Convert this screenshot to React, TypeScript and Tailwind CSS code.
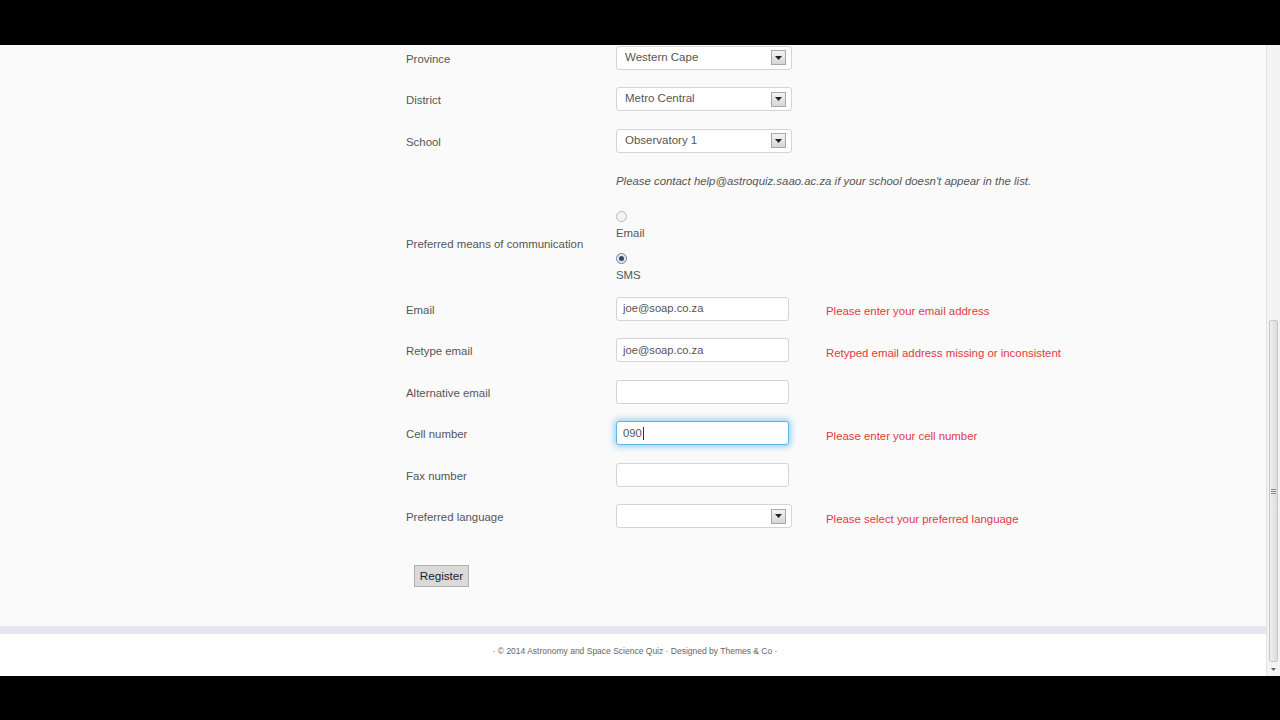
import React from 'react';

const FONT = { fontFamily: '"Liberation Sans", Arial, sans-serif' };

const SelectArrow = () => (
  <span className="flex h-[15px] w-[15px] items-center justify-center border border-[#a8a8a8] bg-gradient-to-b from-[#f4f4f4] to-[#d6d6d6]">
    <svg width="7" height="4" viewBox="0 0 7 4">
      <path d="M0 0 H7 L3.5 4 Z" fill="#222" />
    </svg>
  </span>
);

const FakeSelect: React.FC<{ value?: string }> = ({ value }) => (
  <div className="flex h-[24px] w-[176px] items-center justify-between rounded-[3px] border border-[#d4d4d4] bg-white pl-[8px] pr-[5px] text-[11.5px] text-[#555]">
    <span>{value ?? ''}</span>
    <SelectArrow />
  </div>
);

const FakeInput: React.FC<{ value?: string; focused?: boolean }> = ({ value, focused }) => (
  <div
    className={`flex h-[24px] w-[173px] items-center rounded-[3px] bg-white px-[6px] text-[11.2px] text-[#555] ${
      focused
        ? 'border border-[#5fb4e6] shadow-[0_0_6px_2px_rgba(82,168,236,0.55)]'
        : 'border border-[#d4d4d4]'
    }`}
  >
    <span>{value ?? ''}</span>
    {focused && <span className="ml-[1px] h-[13px] w-px bg-[#333]" />}
  </div>
);

type Row = { label: string; control: React.ReactNode; error?: string };

const FormRow: React.FC<Row> = ({ label, control, error }) => (
  <div className="flex h-[41.5px] items-center">
    <div className="w-[210px] pt-[4px] text-[11.4px] text-[#555]">{label}</div>
    <div className="w-[210px]">{control}</div>
    {error && <div className="pt-[7px] text-[11.4px] text-[#e0393e]">{error}</div>}
  </div>
);

const Radio: React.FC<{ checked?: boolean }> = ({ checked }) => (
  <span
    className={`flex h-[11px] w-[11px] items-center justify-center rounded-full border ${
      checked ? 'border-[#6d8aa5] bg-[#dfe8f0]' : 'border-[#b8b8b8] bg-[#f3f3f3]'
    }`}
  >
    {checked && <span className="h-[5px] w-[5px] rounded-full bg-[#2f4c68]" />}
  </span>
);

export default function App() {
  return (
    <div className="flex h-[720px] w-[1280px] flex-col overflow-hidden bg-black" style={FONT}>
      <div className="h-[45px] shrink-0 bg-black" />
      <div className="flex h-[631px] shrink-0">
        <div className="flex flex-1 flex-col overflow-hidden bg-[#fafafa]">
          <div className="-mt-[8.25px] pl-[406px]">
            <FormRow label="Province" control={<FakeSelect value="Western Cape" />} />
            <FormRow label="District" control={<FakeSelect value="Metro Central" />} />
            <FormRow label="School" control={<FakeSelect value="Observatory 1" />} />
            <div className="flex h-[40px] items-center">
              <div className="w-[210px]" />
              <div className="text-[11.4px] italic text-[#555]">
                Please contact help@astroquiz.saao.ac.za if your school doesn't appear in the list.
              </div>
            </div>
            <div className="flex h-[86.5px] items-center">
              <div className="w-[210px] text-[11.4px] text-[#555]">Preferred means of communication</div>
              <div className="flex h-full flex-col pt-[9.5px] text-[11.4px] text-[#555]">
                <div className="flex flex-col">
                  <Radio />
                  <span className="mt-[3px] leading-[16px]">Email</span>
                </div>
                <div className="mt-[12px] flex flex-col">
                  <Radio checked />
                  <span className="mt-[3px] leading-[16px]">SMS</span>
                </div>
              </div>
            </div>
            <FormRow
              label="Email"
              control={<FakeInput value="joe@soap.co.za" />}
              error="Please enter your email address"
            />
            <FormRow
              label="Retype email"
              control={<FakeInput value="joe@soap.co.za" />}
              error="Retyped email address missing or inconsistent"
            />
            <FormRow label="Alternative email" control={<FakeInput />} />
            <FormRow label="Cell number" control={<FakeInput value="090" focused />} error="Please enter your cell number" />
            <FormRow label="Fax number" control={<FakeInput />} />
            <FormRow
              label="Preferred language"
              control={<FakeSelect />}
              error="Please select your preferred language"
            />
            <div className="mt-[26px] pl-[8px]">
              <button className="h-[22px] w-[55px] border border-[#b0b0b0] bg-[#dadada] text-[11.7px] text-[#222]">
                Register
              </button>
            </div>
          </div>
          <div className="flex-1" />
          <div className="h-[8px] bg-[#e6e7ee]" />
          <div className="flex h-[42px] justify-center bg-white pt-[11px] text-[8.5px] text-[#666]">
            <span className="pl-[4px]">· © 2014 Astronomy and Space Science Quiz · Designed by Themes &amp; Co ·</span>
          </div>
        </div>
        <div className="flex w-[14px] flex-col border-l border-[#e2e2e2] bg-[#f4f4f4]">
          <div className="h-[275px]" />
          <div className="mx-[2px] flex flex-1 items-center justify-center rounded-[2px] border border-[#c6c6c6] bg-gradient-to-r from-[#f0f0f0] to-[#dcdcdc]">
            <div className="flex flex-col gap-[1px]">
              <span className="h-px w-[5px] bg-[#888]" />
              <span className="h-px w-[5px] bg-[#888]" />
              <span className="h-px w-[5px] bg-[#888]" />
            </div>
          </div>
          <div className="flex h-[14px] items-center justify-center">
            <svg width="5" height="3" viewBox="0 0 5 3">
              <path d="M0 0 H5 L2.5 3 Z" fill="#666" />
            </svg>
          </div>
        </div>
      </div>
      <div className="flex-1 bg-black" />
    </div>
  );
}
